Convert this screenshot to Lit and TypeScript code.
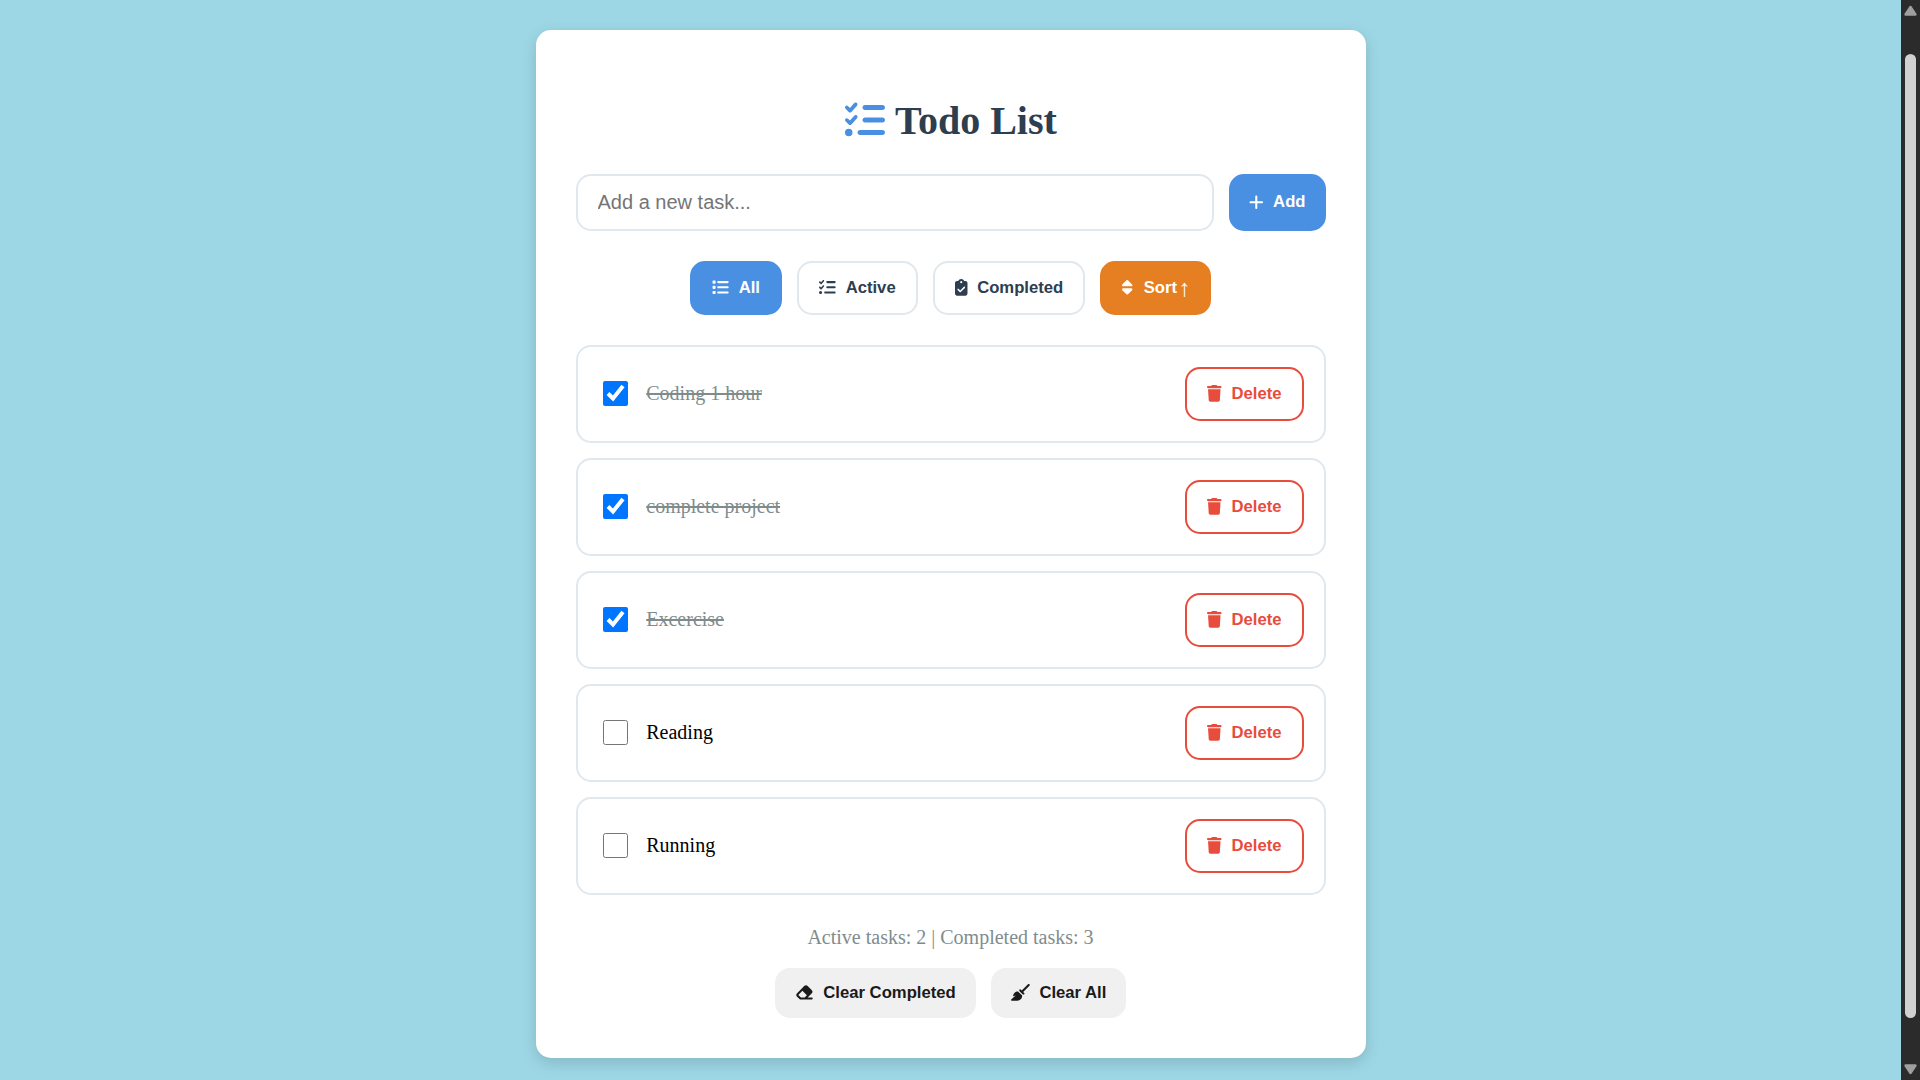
import { LitElement, html, css, svg } from "lit";
import { customElement, property, state } from "lit/decorators.js";
import { classMap } from "lit/directives/class-map.js";

type Glyph = { width: number; path: string };

const GLYPHS: Record<string, Glyph> = {
  listCheck: {
    width: 512,
    path: "M152.1 38.2c9.9 8.9 10.7 24 1.8 33.9l-72 80c-4.4 4.9-10.6 7.8-17.2 7.9s-12.9-2.4-17.6-7L7 113C-2.3 103.6-2.3 88.4 7 79s24.6-9.4 33.9 0l22.1 22.1 55.1-61.2c8.9-9.9 24-10.7 33.9-1.8zm0 160c9.9 8.9 10.7 24 1.8 33.9l-72 80c-4.4 4.9-10.6 7.8-17.2 7.9s-12.9-2.4-17.6-7L7 273c-9.4-9.4-9.4-24.6 0-33.9s24.6-9.4 33.9 0l22.1 22.1 55.1-61.2c8.9-9.9 24-10.7 33.9-1.8zM224 96c0-17.7 14.3-32 32-32l224 0c17.7 0 32 14.3 32 32s-14.3 32-32 32l-224 0c-17.7 0-32-14.3-32-32zm0 160c0-17.7 14.3-32 32-32l224 0c17.7 0 32 14.3 32 32s-14.3 32-32 32l-224 0c-17.7 0-32-14.3-32-32zM160 416c0-17.7 14.3-32 32-32l288 0c17.7 0 32 14.3 32 32s-14.3 32-32 32l-288 0c-17.7 0-32-14.3-32-32zM48 368a48 48 0 1 1 0 96 48 48 0 1 1 0-96z",
  },
  plus: {
    width: 448,
    path: "M256 80c0-17.7-14.3-32-32-32s-32 14.3-32 32l0 144L48 224c-17.7 0-32 14.3-32 32s14.3 32 32 32l144 0 0 144c0 17.7 14.3 32 32 32s32-14.3 32-32l0-144 144 0c17.7 0 32-14.3 32-32s-14.3-32-32-32l-144 0 0-144z",
  },
  list: {
    width: 512,
    path: "M40 48C26.7 48 16 58.7 16 72l0 48c0 13.3 10.7 24 24 24l48 0c13.3 0 24-10.7 24-24l0-48c0-13.3-10.700-24-24-24L40 48zM192 64c-17.700 0-32 14.300-32 32s14.300 32 32 32l288 0c17.700 0 32-14.300 32-32s-14.300-32-32-32L192 64zm0 160c-17.700 0-32 14.300-32 32s14.300 32 32 32l288 0c17.700 0 32-14.300 32-32s-14.300-32-32-32l-288 0zm0 160c-17.700 0-32 14.300-32 32s14.300 32 32 32l288 0c17.700 0 32-14.300 32-32s-14.300-32-32-32l-288 0zM16 232l0 48c0 13.300 10.700 24 24 24l48 0c13.300 0 24-10.700 24-24l0-48c0-13.300-10.700-24-24-24l-48 0c-13.300 0-24 10.700-24 24zM40 368c-13.300 0-24 10.700-24 24l0 48c0 13.300 10.700 24 24 24l48 0c13.300 0 24-10.700 24-24l0-48c0-13.300-10.700-24-24-24l-48 0z",
  },
  clipboardCheck: {
    width: 384,
    path: "M192 0c-41.8 0-77.4 26.7-90.5 64L64 64C28.7 64 0 92.7 0 128L0 448c0 35.3 28.7 64 64 64l256 0c35.3 0 64-28.7 64-64l0-320c0-35.3-28.7-64-64-64l-37.5 0C269.4 26.7 233.8 0 192 0zm0 64a32 32 0 1 1 0 64 32 32 0 1 1 0-64zM305 273L177 401c-9.4 9.4-24.6 9.4-33.9 0L79 337c-9.4-9.4-9.4-24.6 0-33.9s24.6-9.4 33.9 0l47 47L271 239c9.4-9.4 24.6-9.4 33.9 0s9.4 24.6 0 33.9z",
  },
  sort: {
    width: 320,
    path: "M137.4 41.4c12.5-12.5 32.8-12.5 45.3 0l128 128c9.2 9.2 11.9 22.9 6.9 34.9s-16.6 19.8-29.6 19.8L32 224c-12.9 0-24.6-7.8-29.6-19.8s-2.2-25.7 6.9-34.9l128-128zm0 429.3l-128-128c-9.2-9.2-11.9-22.9-6.9-34.9s16.6-19.8 29.6-19.8l256 0c12.9 0 24.6 7.8 29.6 19.8s2.2 25.7-6.9 34.9l-128 128c-12.5 12.5-32.8 12.5-45.3 0z",
  },
  trash: {
    width: 448,
    path: "M135.2 17.7L128 32 32 32C14.3 32 0 46.3 0 64S14.3 96 32 96l384 0c17.7 0 32-14.3 32-32s-14.3-32-32-32l-96 0-7.2-14.3C307.4 6.8 296.3 0 284.2 0L163.8 0c-12.1 0-23.2 6.8-28.6 17.7zM416 128L32 128 53.2 467c1.6 25.3 22.6 45 47.9 45l245.8 0c25.3 0 46.3-19.7 47.9-45L416 128z",
  },
  eraser: {
    width: 576,
    path: "M290.7 57.4L57.4 290.7c-25 25-25 65.5 0 90.5l80 80c12 12 28.3 18.7 45.3 18.7L288 480l9.4 0L512 480c17.7 0 32-14.3 32-32s-14.3-32-32-32l-124.1 0L518.6 285.3c25-25 25-65.5 0-90.5L381.3 57.4c-25-25-65.5-25-90.5 0zM297.4 416l-9.4 0-105.4 0-80-80L227.3 211.3 364.7 348.7 297.4 416z",
  },
  broom: {
    width: 576,
    path: "M566.6 54.6c12.5-12.5 12.5-32.8 0-45.3s-32.8-12.5-45.3 0l-192 192-34.7-34.7c-4.2-4.2-10-6.6-16-6.6c-12.5 0-22.6 10.1-22.6 22.6l0 29.1L364.3 320l29.1 0c12.5 0 22.6-10.1 22.6-22.6c0-6-2.4-11.8-6.6-16l-34.7-34.7 192-192zM341.1 353.4L222.6 234.9c-42.7-3.7-85.2 11.7-115.8 42.3l-8 8C76.5 307.5 64 337.7 64 369.2c0 6.8 7.1 11.2 13.2 8.2l51.1-25.5c5-2.5 9.5 4.1 5.4 7.9L7.3 473.4C2.7 477.6 0 483.6 0 489.9C0 502.1 9.9 512 22.1 512l173.3 0c38.8 0 75.9-15.4 103.4-42.8c30.6-30.6 45.9-73.1 42.3-115.8z",
  },
};

/** Solid icon, one em tall, drawn in the current text colour. */
@customElement("todo-icon")
class TodoIcon extends LitElement {
  @property() name = "list";

  static styles = css`
    :host {
      display: inline-flex;
      flex: none;
    }
    .glyph {
      height: 1em;
      width: auto;
      fill: currentColor;
      display: block;
      overflow: visible;
    }
  `;

  render() {
    const g = GLYPHS[this.name];
    return html`<svg class="glyph" viewBox="0 0 ${g.width} 512" aria-hidden="true">
      ${svg`<path d=${g.path}></path>`}
    </svg>`;
  }
}

const buttonStyles = css`
  .btn {
    display: flex;
    align-items: center;
    gap: 10px;
    box-sizing: border-box;
    margin: 0;
    padding: 15px 20px;
    border: 0;
    border-radius: 15px;
    font: bold 16.667px/20px "Liberation Sans", Arial, sans-serif;
    white-space: nowrap;
    cursor: pointer;
  }
  .btn todo-icon {
    margin-bottom: 1.5px;
  }
  .outlined {
    border: 2px solid #e1e8ed;
    background: #fff;
    color: #2c3e50;
  }
`;

@customElement("todo-item")
class TodoItem extends LitElement {
  @property() label = "";
  @property({ type: Boolean }) done = false;

  static styles = [
    buttonStyles,
    css`
      :host {
        display: block;
      }
      .row {
        display: flex;
        align-items: center;
        box-sizing: border-box;
        height: 98px;
        padding: 20px;
        border: 2px solid #e1e8ed;
        border-radius: 15px;
        background: #fff;
      }
      .check {
        width: 25px;
        height: 25px;
        margin: 0 18.75px 1px 5px;
      }
      .label {
        flex: 1;
        margin-bottom: 1px;
        font: 20px/23px "Liberation Serif", "Times New Roman", serif;
        color: #000;
      }
      .label.done {
        color: #7f8c8d;
        text-decoration: line-through;
      }
      .delete {
        border-color: #e74c3c;
        color: #e74c3c;
      }
    `,
  ];

  private emit(type: string) {
    this.dispatchEvent(new CustomEvent(type));
  }

  render() {
    return html`
      <div class="row">
        <input
          class="check"
          type="checkbox"
          aria-label=${this.label}
          .checked=${this.done}
          @change=${() => this.emit("toggle-task")}
        />
        <span class=${classMap({ label: true, done: this.done })}>${this.label}</span>
        <button class="btn outlined delete" @click=${() => this.emit("delete-task")}>
          <todo-icon name="trash"></todo-icon>Delete
        </button>
      </div>
    `;
  }
}

/** Dark vertical scrollbar along the right edge of the page. */
@customElement("page-scrollbar")
class PageScrollbar extends LitElement {
  static styles = css`
    :host {
      display: flex;
      flex-direction: column;
      align-items: center;
      justify-content: space-between;
      box-sizing: border-box;
      width: 19px;
      padding: 5px 0 5px;
      background: #2b2b2b;
    }
    .arrow {
      display: block;
      width: 13px;
      height: 11px;
      fill: #9f9f9f;
    }
    .thumb {
      width: 11px;
      flex: 1;
      margin: 38px 0 46px;
      border-radius: 5.5px;
      background: #d1d1d1;
    }
  `;

  render() {
    return html`
      <svg class="arrow" viewBox="0 0 13 11"><path d="M6.500 0.800Q7.200 0.800 7.700 1.500L12.600 9Q13 10.700 11.500 10.700H1.500Q0 10.700 0.400 9L5.300 1.500Q5.800 0.800 6.500 0.800z" /></svg>
      <div class="thumb"></div>
      <svg class="arrow" viewBox="0 0 13 11"><path d="M6.500 10.200Q7.200 10.200 7.700 9.500L12.600 2Q13 0.300 11.500 0.300H1.500Q0 0.300 0.400 2L5.300 9.500Q5.800 10.200 6.500 10.200z" /></svg>
    `;
  }
}

type Filter = "all" | "active" | "completed";

@customElement("app-root")
class AppRoot extends LitElement {
  @state() private filter: Filter = "all";
  @state() private ascending = true;
  @state() private tasks = [
    { label: "Coding 1 hour", done: true },
    { label: "complete project", done: true },
    { label: "Excercise", done: true },
    { label: "Reading", done: false },
    { label: "Running", done: false },
  ];

  static styles = [
    buttonStyles,
    css`
      :host {
        display: flex;
        height: 1080px;
        overflow: hidden;
        background: #9dd7e5;
      }
      .page {
        flex: 1;
        display: flex;
        justify-content: center;
        align-items: flex-start;
        padding-top: 30px;
      }
      .card {
        display: flex;
        flex-direction: column;
        box-sizing: border-box;
        width: 830px;
        height: 1028px;
        padding: 66px 40px 40px;
        border-radius: 15px;
        background: #fff;
        box-shadow: 0 5px 15px rgba(0, 0, 0, 0.15);
      }
      .title {
        display: flex;
        align-items: center;
        justify-content: center;
        gap: 10.2px;
        height: 48px;
        margin: 0 0 30px;
        padding-left: 0.5px;
        font: bold 40px/48px "Liberation Serif", "Times New Roman", serif;
        color: #2c3e50;
      }
      .title-icon {
        color: #4a90e2;
      }
      .title-text {
        padding-top: 2px;
      }
      .entry {
        display: flex;
        gap: 15px;
        height: 57px;
        margin-bottom: 30px;
      }
      .field {
        flex: 1;
        min-width: 0;
        box-sizing: border-box;
        padding: 0 20px;
        border: 2px solid #e1e8ed;
        border-radius: 15px;
        font: 20px "Liberation Sans", Arial, sans-serif;
      }
      .field::placeholder {
        color: #757575;
      }
      .add {
        padding-bottom: 17px;
      }
      .add todo-icon {
        margin: 1.5px 0 0;
      }
      .filters,
      .actions {
        display: flex;
        justify-content: center;
        gap: 15px;
      }
      .filters {
        margin-bottom: 30px;
      }
      .primary {
        border-color: #4a90e2;
        background: #4a90e2;
        color: #fff;
      }
      .sort {
        border-color: #e67e22;
        background: #e67e22;
        color: #fff;
      }
      .sort-label {
        display: flex;
        align-items: center;
        gap: 3.5px;
        height: 20px;
        padding-left: 1px;
      }
      .direction {
        display: flex;
        justify-content: center;
        width: 8.5px;
        font-weight: 400;
        font-size: 24px;
      }
      .tasks {
        display: flex;
        flex-direction: column;
        gap: 15px;
      }
      .stats {
        margin: 31px 0 19px;
        font: 20px/23px "Liberation Serif", "Times New Roman", serif;
        color: #7f8c8d;
        text-align: center;
      }
      .plain {
        background: #f0f0f0;
        color: #1a1a1a;
      }
    `,
  ];

  private setDone(target: { label: string; done: boolean }) {
    this.tasks = this.tasks.map((t) => (t === target ? { ...t, done: !t.done } : t));
  }

  private remove(target: { label: string; done: boolean }) {
    this.tasks = this.tasks.filter((t) => t !== target);
  }

  private add() {
    const field = this.renderRoot.querySelector<HTMLInputElement>(".field")!;
    const label = field.value.trim();
    if (!label) return;
    this.tasks = [...this.tasks, { label, done: false }];
    field.value = "";
  }

  private toggleSort() {
    this.ascending = !this.ascending;
    this.tasks = [...this.tasks].reverse();
  }

  private filterButton(id: Filter, icon: string, label: string) {
    return html`<button
      class=${classMap({ btn: true, outlined: true, primary: this.filter === id })}
      @click=${() => (this.filter = id)}
    >
      <todo-icon name=${icon}></todo-icon>${label}
    </button>`;
  }

  render() {
    const completed = this.tasks.filter((t) => t.done).length;
    const visible = this.tasks.filter(
      (t) => this.filter === "all" || t.done === (this.filter === "completed"),
    );
    return html`
      <div class="page">
        <main class="card">
          <h1 class="title">
            <todo-icon class="title-icon" name="listCheck"></todo-icon>
            <span class="title-text">Todo List</span>
          </h1>
          <div class="entry">
            <input class="field" type="text" placeholder="Add a new task..." />
            <button class="btn primary add" @click=${this.add}><todo-icon name="plus"></todo-icon>Add</button>
          </div>
          <div class="filters">
            ${this.filterButton("all", "list", "All")}
            ${this.filterButton("active", "listCheck", "Active")}
            ${this.filterButton("completed", "clipboardCheck", "Completed")}
            <button class="btn outlined sort" @click=${this.toggleSort}>
              <todo-icon name="sort"></todo-icon>
              <span class="sort-label">Sort <span class="direction">${this.ascending ? "↑" : "↓"}</span></span>
            </button>
          </div>
          <div class="tasks">
            ${visible.map(
              (t) => html`<todo-item
                .label=${t.label}
                .done=${t.done}
                @toggle-task=${() => this.setDone(t)}
                @delete-task=${() => this.remove(t)}
              ></todo-item>`,
            )}
          </div>
          <p class="stats">Active tasks: ${this.tasks.length - completed} | Completed tasks: ${completed}</p>
          <div class="actions">
            <button class="btn plain" @click=${() => (this.tasks = this.tasks.filter((t) => !t.done))}>
              <todo-icon name="eraser"></todo-icon>Clear Completed
            </button>
            <button class="btn plain" @click=${() => (this.tasks = [])}>
              <todo-icon name="broom"></todo-icon>Clear All
            </button>
          </div>
        </main>
      </div>
      <page-scrollbar></page-scrollbar>
    `;
  }
}
